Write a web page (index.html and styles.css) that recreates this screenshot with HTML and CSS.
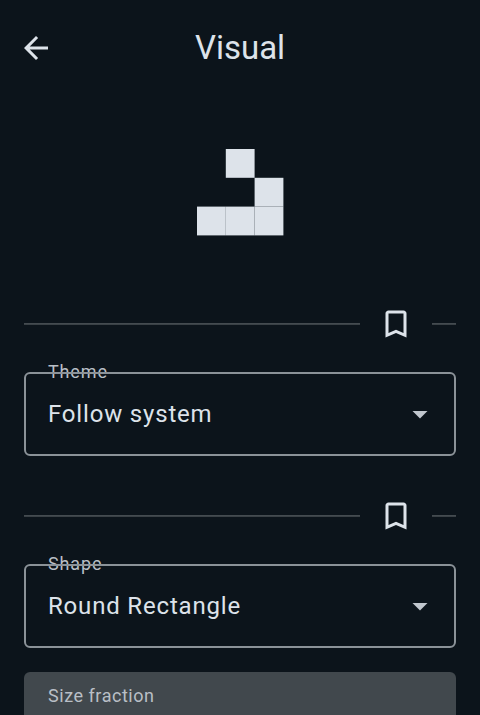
FILE: index.html
```html
<!DOCTYPE html>
<html lang="en">
<head>
<meta charset="utf-8">
<title>Visual</title>
<link rel="stylesheet" href="styles.css">
</head>
<body>
<header class="bar">
  <svg class="icon" viewBox="0 0 24 24"><path d="M20 11H7.83l5.59-5.59L12 4l-8 8 8 8 1.41-1.41L7.83 13H20v-2z"/></svg>
  <h1 class="title">Visual</h1>
</header>
<main class="content">
  <svg class="preview" viewBox="0 0 87 87">
    <rect x="28.8" y="0" width="28.8" height="28.8"/>
    <rect x="57.6" y="28.8" width="28.8" height="28.8"/>
    <rect x="0" y="57.6" width="28.8" height="28.8"/>
    <rect x="28.8" y="57.6" width="28.8" height="28.8"/>
    <rect x="57.6" y="57.6" width="28.8" height="28.8"/>
  </svg>
  <div class="divider">
    <span class="line long"></span>
    <svg class="icon" viewBox="0 0 24 24"><path d="M17 3H7c-1.1 0-2 .9-2 2v16l7-3 7 3V5c0-1.100-.9-2-2-2zm0 15l-5-2.180L7 18V5h10v13z"/></svg>
    <span class="line short"></span>
  </div>
  <div class="field">
    <span class="label floating">Theme</span>
    <span class="value">Follow system</span>
    <svg class="icon arrow" viewBox="0 0 24 24"><path d="M7 10l5 5 5-5z"/></svg>
  </div>
  <div class="divider">
    <span class="line long"></span>
    <svg class="icon" viewBox="0 0 24 24"><path d="M17 3H7c-1.1 0-2 .9-2 2v16l7-3 7 3V5c0-1.100-.9-2-2-2zm0 15l-5-2.180L7 18V5h10v13z"/></svg>
    <span class="line short"></span>
  </div>
  <div class="field">
    <span class="label floating">Shape</span>
    <span class="value">Round Rectangle</span>
    <svg class="icon arrow" viewBox="0 0 24 24"><path d="M7 10l5 5 5-5z"/></svg>
  </div>
  <div class="filled"><span class="label">Size fraction</span></div>
</main>
</body>
</html>
```
FILE: styles.css
```css
* { box-sizing: border-box; }

body {
  margin: 0;
  height: 715px;
  overflow: hidden;
  background: #0c141b;
  color: #dde3ea;
  font-family: Roboto, sans-serif;
}

.bar {
  display: grid;
  grid-template-columns: 36px 1fr 36px;
  align-items: center;
  height: 96px;
  padding: 0 18px;
}

.title {
  margin: 0;
  text-align: center;
  font-size: 33px;
  font-weight: 400;
  line-height: 42px;
}

.icon {
  display: block;
  flex: none;
  width: 36px;
  height: 36px;
  fill: #dde3ea;
}

.content {
  display: flex;
  flex-direction: column;
  padding: 0 24px;
}

.preview {
  flex: none;
  width: 87px;
  height: 87px;
  margin: 53px 0 52px 173px;
  fill: #dde3ea;
}

.divider {
  display: flex;
  flex: none;
  align-items: center;
  gap: 18px;
  height: 72px;
}

.line {
  height: 2px;
  background: linear-gradient(#444b50 50%, #3a4146 50%);
}

.long { flex: 1; }
.short { width: 24px; }

.field {
  position: relative;
  display: flex;
  flex: none;
  align-items: center;
  justify-content: space-between;
  height: 84px;
  margin: 12px 0 24px;
  padding: 0 16px 0 22px;
  border: 2px solid #8b9298;
  border-radius: 6px;
}

.label {
  color: #b9bfc6;
  font-size: 18px;
  line-height: 24px;
  letter-spacing: 0.54px;
}

.floating {
  position: absolute;
  top: -14px;
  left: 22px;
  z-index: -1;
  letter-spacing: 0.85px;
}

.value {
  font-size: 24px;
  line-height: 36px;
  letter-spacing: 0.82px;
}

.arrow { fill: #c1c7ce; }

.filled {
  flex: none;
  height: 43px;
  padding: 12px 24px 0;
  border-radius: 6px 6px 0 0;
  background: #41484d;
}

.filled .label { display: block; }
```
